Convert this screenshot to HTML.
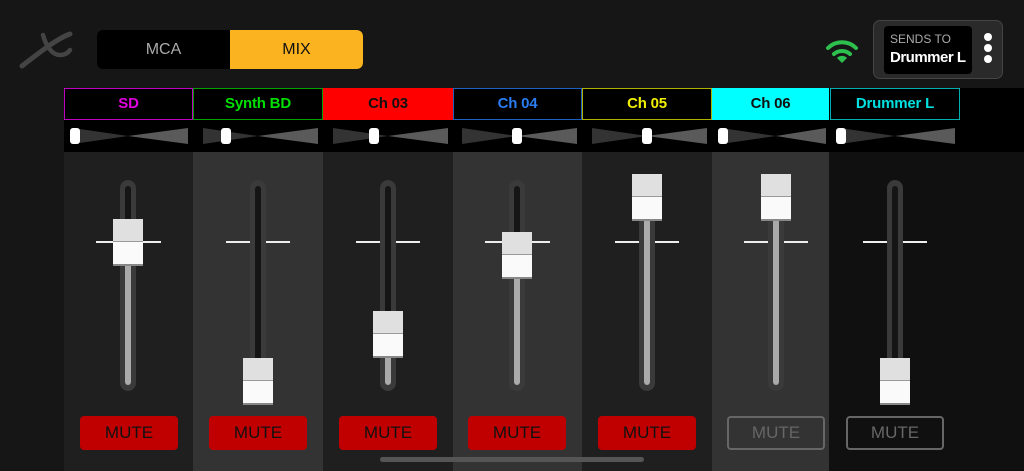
<!DOCTYPE html>
<html><head><meta charset="utf-8"><style>
*{margin:0;padding:0;box-sizing:border-box}
body{width:1024px;height:471px;background:#161616;position:relative;overflow:hidden;font-family:"Liberation Sans",sans-serif}
.a{position:absolute}
.seg{left:97px;top:30px;width:266px;height:39px;background:#000;border-radius:6px;overflow:hidden}
.seg div{position:absolute;top:0;height:39px;line-height:39px;text-align:center;font-size:16px}
.hdr{top:88px;height:32px;line-height:30px;text-align:center;font-size:15px;font-weight:bold;border:1.5px solid;letter-spacing:-0.2px}
.strip{top:152px;height:319px}
.trk{width:16px;top:180px;height:211px;background:#3a3a3a;border-radius:8px}
.trk i{position:absolute;left:5px;top:6px;width:6px;height:199px;background:#151515;border-radius:3px}
.trk b{position:absolute;left:5px;width:6px;background:#aaa;border-radius:3px;bottom:6px}
.uni{top:241px;height:2px;background:#eee}
.h{width:30px;height:47px}
.h s{display:block;height:23px;background:#e0e0e0;border-bottom:1px solid #999}
.h u{display:block;height:24px;background:#fafafa;border-bottom:2px solid #888}
.mute{top:416px;width:98px;height:34px;border-radius:4px;line-height:34px;text-align:center;font-size:17px}
.red{background:#c00000;color:#111}
.off{border:2px solid #666;color:#666;line-height:30px}
.ph{top:128px;width:10px;height:16px;background:#fff;border-radius:3px}
</style></head><body>
<svg class="a" style="left:0;top:0" width="90" height="80" viewBox="0 0 90 80"><path d="M43 35 C46 46 52 55 60 55 C65 55 68 53 70 50" stroke="#444" stroke-width="4.5" fill="none" stroke-linecap="round"/><path d="M70 34 C58 38 40 52 22 66" stroke="#444" stroke-width="5" fill="none" stroke-linecap="round"/></svg>
<div class="a seg"><div style="left:0;width:133px;color:#aaa">MCA</div><div style="left:133px;width:133px;background:#fbb31f;color:#111;border-radius:0 6px 6px 0">MIX</div></div>
<svg class="a" style="left:824px;top:37px" width="36" height="26" viewBox="0 0 36 26"><path d="M4 11 A20 20 0 0 1 32 11" stroke="#2ec04f" stroke-width="4" fill="none" stroke-linecap="round"/><path d="M10 17 A12 12 0 0 1 26 17" stroke="#2ec04f" stroke-width="4" fill="none" stroke-linecap="round"/><path d="M13 21 L18 26 L23 21 A7 7 0 0 0 13 21Z" fill="#2ec04f"/></svg>
<div class="a" style="left:873px;top:20px;width:130px;height:59px;background:#2a2a2a;border:1.5px solid #444;border-radius:7px"></div>
<div class="a" style="left:884px;top:26px;width:88px;height:48px;background:#000;border-radius:4px"></div>
<div class="a" style="left:890px;top:32px;font-size:12px;color:#aaa">SENDS TO</div>
<div class="a" style="left:890px;top:49px;font-size:15px;color:#fff;font-weight:bold;letter-spacing:-0.5px">Drummer L</div>
<div class="a" style="left:984px;top:33px;width:8px;height:8px;border-radius:4px;background:#fff"></div>
<div class="a" style="left:984px;top:44px;width:8px;height:8px;border-radius:4px;background:#fff"></div>
<div class="a" style="left:984px;top:55px;width:8px;height:8px;border-radius:4px;background:#fff"></div>
<div class="a" style="left:64px;top:88px;width:960px;height:64px;background:#000"></div>

<div class="a strip" style="left:64px;width:129px;background:#1f1f1f"></div>
<div class="a strip" style="left:193px;width:130px;background:#333"></div>
<div class="a strip" style="left:323px;width:130px;background:#1f1f1f"></div>
<div class="a strip" style="left:453px;width:129px;background:#333"></div>
<div class="a strip" style="left:582px;width:130px;background:#1f1f1f"></div>
<div class="a strip" style="left:712px;width:117px;background:#333"></div>
<div class="a strip" style="left:829px;width:195px;background:#101010"></div>

<div class="a hdr" style="left:64px;width:129px;border-color:#c000c0;color:#e000e0">SD</div>
<div class="a hdr" style="left:193px;width:130px;border-color:#00a000;color:#00e000">Synth BD</div>
<div class="a hdr" style="left:323px;width:130px;border-color:#f00;background:#f00;color:#111">Ch 03</div>
<div class="a hdr" style="left:453px;width:129px;border-color:#1e5fc0;color:#2a7cf0">Ch 04</div>
<div class="a hdr" style="left:582px;width:130px;border-color:#b0b000;color:#f0f000">Ch 05</div>
<div class="a hdr" style="left:712px;width:117px;border-color:#0ff;background:#0ff;color:#111">Ch 06</div>
<div class="a hdr" style="left:830px;width:130px;border-color:#00b0b0;color:#00e0e0">Drummer L</div>

<svg class="a" style="left:0;top:120px" width="1024" height="32">
<g fill="#333"><polygon points="73,8 128,16 73,24"/><polygon points="203,8 258,16 203,24"/><polygon points="333,8 388,16 333,24"/><polygon points="462,8 517,16 462,24"/><polygon points="592,8 647,16 592,24"/><polygon points="721,8 776,16 721,24"/><polygon points="840,8 895,16 840,24"/></g>
<g fill="#5a5a5a"><polygon points="128,16 188,8 188,24"/><polygon points="258,16 318,8 318,24"/><polygon points="388,16 448,8 448,24"/><polygon points="517,16 577,8 577,24"/><polygon points="647,16 707,8 707,24"/><polygon points="776,16 826,8 826,24"/><polygon points="895,16 955,8 955,24"/></g>
</svg>
<div class="a ph" style="left:70px"></div><div class="a ph" style="left:221px"></div><div class="a ph" style="left:369px"></div><div class="a ph" style="left:512px"></div><div class="a ph" style="left:642px"></div><div class="a ph" style="left:718px"></div><div class="a ph" style="left:836px"></div>

<div class="a trk" style="left:120px"><i></i><b style="height:124px"></b></div>
<div class="a uni" style="left:96px;width:65px"></div>
<div class="a h" style="left:113px;top:219px"><s></s><u></u></div>

<div class="a trk" style="left:250px"><i></i></div>
<div class="a uni" style="left:226px;width:24px"></div><div class="a uni" style="left:266px;width:24px"></div>
<div class="a h" style="left:243px;top:358px"><s></s><u></u></div>

<div class="a trk" style="left:380px"><i></i><b style="height:30px"></b></div>
<div class="a uni" style="left:356px;width:24px"></div><div class="a uni" style="left:396px;width:24px"></div>
<div class="a h" style="left:373px;top:311px"><s></s><u></u></div>

<div class="a trk" style="left:509px"><i></i><b style="height:110px"></b></div>
<div class="a uni" style="left:485px;width:65px"></div>
<div class="a h" style="left:502px;top:232px"><s></s><u></u></div>

<div class="a trk" style="left:639px"><i></i><b style="height:168px"></b></div>
<div class="a uni" style="left:615px;width:24px"></div><div class="a uni" style="left:655px;width:24px"></div>
<div class="a h" style="left:632px;top:174px"><s></s><u></u></div>

<div class="a trk" style="left:768px"><i></i><b style="height:168px"></b></div>
<div class="a uni" style="left:744px;width:24px"></div><div class="a uni" style="left:784px;width:24px"></div>
<div class="a h" style="left:761px;top:174px"><s></s><u></u></div>

<div class="a trk" style="left:887px"><i></i></div>
<div class="a uni" style="left:863px;width:24px"></div><div class="a uni" style="left:903px;width:24px"></div>
<div class="a h" style="left:880px;top:358px"><s></s><u></u></div>

<div class="a mute red" style="left:80px">MUTE</div>
<div class="a mute red" style="left:209px">MUTE</div>
<div class="a mute red" style="left:339px">MUTE</div>
<div class="a mute red" style="left:468px">MUTE</div>
<div class="a mute red" style="left:598px">MUTE</div>
<div class="a mute off" style="left:727px">MUTE</div>
<div class="a mute off" style="left:846px">MUTE</div>
<div class="a" style="left:380px;top:457px;width:264px;height:5px;border-radius:3px;background:#555"></div>
</body></html>
